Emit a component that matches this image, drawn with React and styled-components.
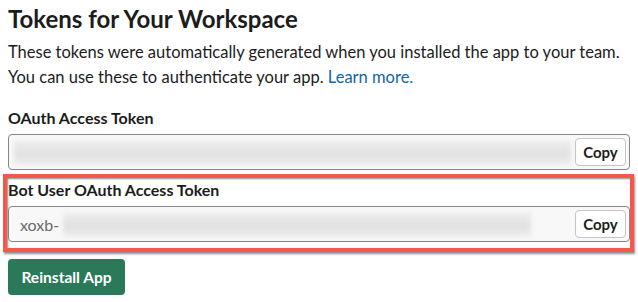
import React from "react";
import styled, { createGlobalStyle } from "styled-components";

const Global = createGlobalStyle`
  html, body { margin: 0; padding: 0; background: #fff; }
  body { font-family: Lato, "Noto Sans", sans-serif; color: #1d1c1d; }
`;

const Page = styled.div`
  padding: 5px 8px 0;
  width: 638px;
  box-sizing: border-box;
`;

const Title = styled.h2`
  margin: 0;
  font-size: 24px;
  line-height: 28px;
  font-weight: 700;
`;

const Intro = styled.p`
  margin: 6.5px 0 0;
  font-size: 16.5px;
  line-height: 25px;
  white-space: nowrap;
`;

const Link = styled.a`
  color: #1264a3;
  text-decoration: none;
`;

const Section = styled.div`
  margin-top: ${(p) => p.$top || 0}px;
`;

const Highlight = styled.div`
  margin: 4px -4px 0 -5px;
  padding: 2.5px 0 6px 1px;
  border: 4px solid #f4574c;
  box-shadow: 1px 2px 2px rgba(0, 0, 0, 0.45), inset 1px 1px 2px rgba(0, 0, 0, 0.45);
`;

const Label = styled.div`
  font-size: 16px;
  line-height: 20px;
  font-weight: 700;
`;

const Field = styled.div`
  margin-top: 6px;
  height: 36px;
  box-sizing: border-box;
  border: 1px solid #868686;
  border-radius: 4px;
  background: #f8f8f8;
  display: flex;
  align-items: center;
  padding: 0 3px 0 ${(p) => p.$padLeft}px;
  gap: 4px;
`;

const Prefix = styled.span`
  font-size: 16px;
  color: #6b6a6b;
  flex: none;
`;

const Blur = styled.span`
  flex: 1;
  align-self: stretch;
  margin: 5px ${(p) => p.$right}px 4px 0;
  background: linear-gradient(
    180deg,
    #f0f0f0 0%,
    #e4e4e4 40%,
    #e2e2e2 60%,
    #eeeeee 100%
  );
  filter: blur(2px);
`;

const CopyButton = styled.button`
  flex: none;
  width: 51px;
  height: 28px;
  box-sizing: border-box;
  border: 1px solid #c4c4c4;
  border-radius: 4px;
  background: #fff;
  font-family: Lato, "Noto Sans", sans-serif;
  font-weight: 700;
  font-size: 15px;
  color: #1d1c1d;
  padding: 0;
`;

const Primary = styled.button`
  margin-top: 7px;
  width: 117px;
  height: 36px;
  border: none;
  border-radius: 4px;
  background: #2a7a5a;
  color: #fff;
  font-family: Lato, "Noto Sans", sans-serif;
  font-weight: 700;
  font-size: 15.5px;
  padding: 0;
`;

export default function App() {
  return (
    <>
      <Global />
      <Page>
        <Title>Tokens for Your Workspace</Title>
        <Intro>
          These tokens were automatically generated when you installed the app to your team.
          <br />
          You can use these to authenticate your app. <Link href="#">Learn more.</Link>
        </Intro>
        <Section $top={18}>
          <Label>OAuth Access Token</Label>
          <Field $padLeft={5}>
            <Blur $right={0} />
            <CopyButton>Copy</CopyButton>
          </Field>
        </Section>
        <Highlight>
          <Label>Bot User OAuth Access Token</Label>
          <Field $padLeft={11}>
            <Prefix>xoxb-</Prefix>
            <Blur $right={40} />
            <CopyButton>Copy</CopyButton>
          </Field>
        </Highlight>
        <Primary>Reinstall App</Primary>
      </Page>
    </>
  );
}
